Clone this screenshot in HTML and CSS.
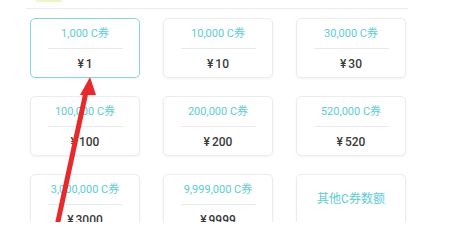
FILE: index.html
```html
<!DOCTYPE html>
<html lang="zh">
<head>
<meta charset="utf-8">
<link rel="stylesheet" href="styles.css">
</head>
<body>
<div class="page">
  <div class="head"><div class="head-mark"></div></div>
  <div class="grid">
    <div class="card selected"><div class="amt">1,000 C券</div><div class="sep"></div><div class="price"><span class="yen">¥</span>1</div></div>
    <div class="card"><div class="amt">10,000 C券</div><div class="sep"></div><div class="price"><span class="yen">¥</span>10</div></div>
    <div class="card"><div class="amt">30,000 C券</div><div class="sep"></div><div class="price"><span class="yen">¥</span>30</div></div>
    <div class="card"><div class="amt">100,000 C券</div><div class="sep"></div><div class="price"><span class="yen">¥</span>100</div></div>
    <div class="card"><div class="amt">200,000 C券</div><div class="sep"></div><div class="price"><span class="yen">¥</span>200</div></div>
    <div class="card"><div class="amt">520,000 C券</div><div class="sep"></div><div class="price"><span class="yen">¥</span>520</div></div>
    <div class="card"><div class="amt">3,000,000 C券</div><div class="sep"></div><div class="price"><span class="yen">¥</span>3000</div></div>
    <div class="card"><div class="amt">9,999,000 C券</div><div class="sep"></div><div class="price"><span class="yen">¥</span>9999</div></div>
    <div class="card other"><div class="amt big">其他C券数额</div></div>
  </div>
</div>
<svg class="arrow" width="450" height="222" viewBox="0 0 450 222">
  <line x1="86" y1="92" x2="57" y2="226" stroke="#e8292b" stroke-width="5"/>
  <polygon points="90,77 80,95 96,95" fill="#e8292b"/>
</svg>
</body>
</html>
```
FILE: styles.css
```css
html, body {
  margin: 0;
  padding: 0;
  background: #ffffff;
}
body {
  width: 450px;
  height: 222px;
  overflow: hidden;
  position: relative;
  font-family: Roboto, "Noto Sans CJK SC", sans-serif;
}
.page {
  padding-left: 26px;
  width: 382px;
}
.head {
  height: 8px;
  border-bottom: 1px solid #ededed;
  padding-left: 10px;
}
.head-mark {
  width: 26px;
  height: 2px;
  background: #eef3c8;
  border-radius: 1px;
}
.grid {
  display: grid;
  grid-template-columns: repeat(3, 110px);
  grid-auto-rows: 60px;
  column-gap: 23px;
  row-gap: 18px;
  padding: 9px 0 0 4px;
}
.card {
  box-sizing: border-box;
  border: 1px solid #ececec;
  border-radius: 5px;
  box-shadow: 0 1px 3px rgba(0, 0, 0, 0.05);
  background: #fff;
  display: flex;
  flex-direction: column;
  align-items: center;
  padding-top: 7px;
}
.card.selected {
  border-color: #86d6db;
}
.amt {
  font-size: 11px;
  line-height: 16px;
  color: #5ecbd4;
  white-space: nowrap;
}
.amt.big {
  font-size: 12px;
}
.sep {
  width: 75px;
  height: 1px;
  background: #e9e9e9;
  margin-top: 6px;
}
.price {
  margin-top: 7px;
  font-size: 12px;
  line-height: 16px;
  font-weight: 500;
  color: #3a3a3a;
}
.yen {
  margin-right: 2px;
}
.card.other {
  padding-top: 16px;
}
.arrow {
  position: absolute;
  left: 0;
  top: 0;
}
```
